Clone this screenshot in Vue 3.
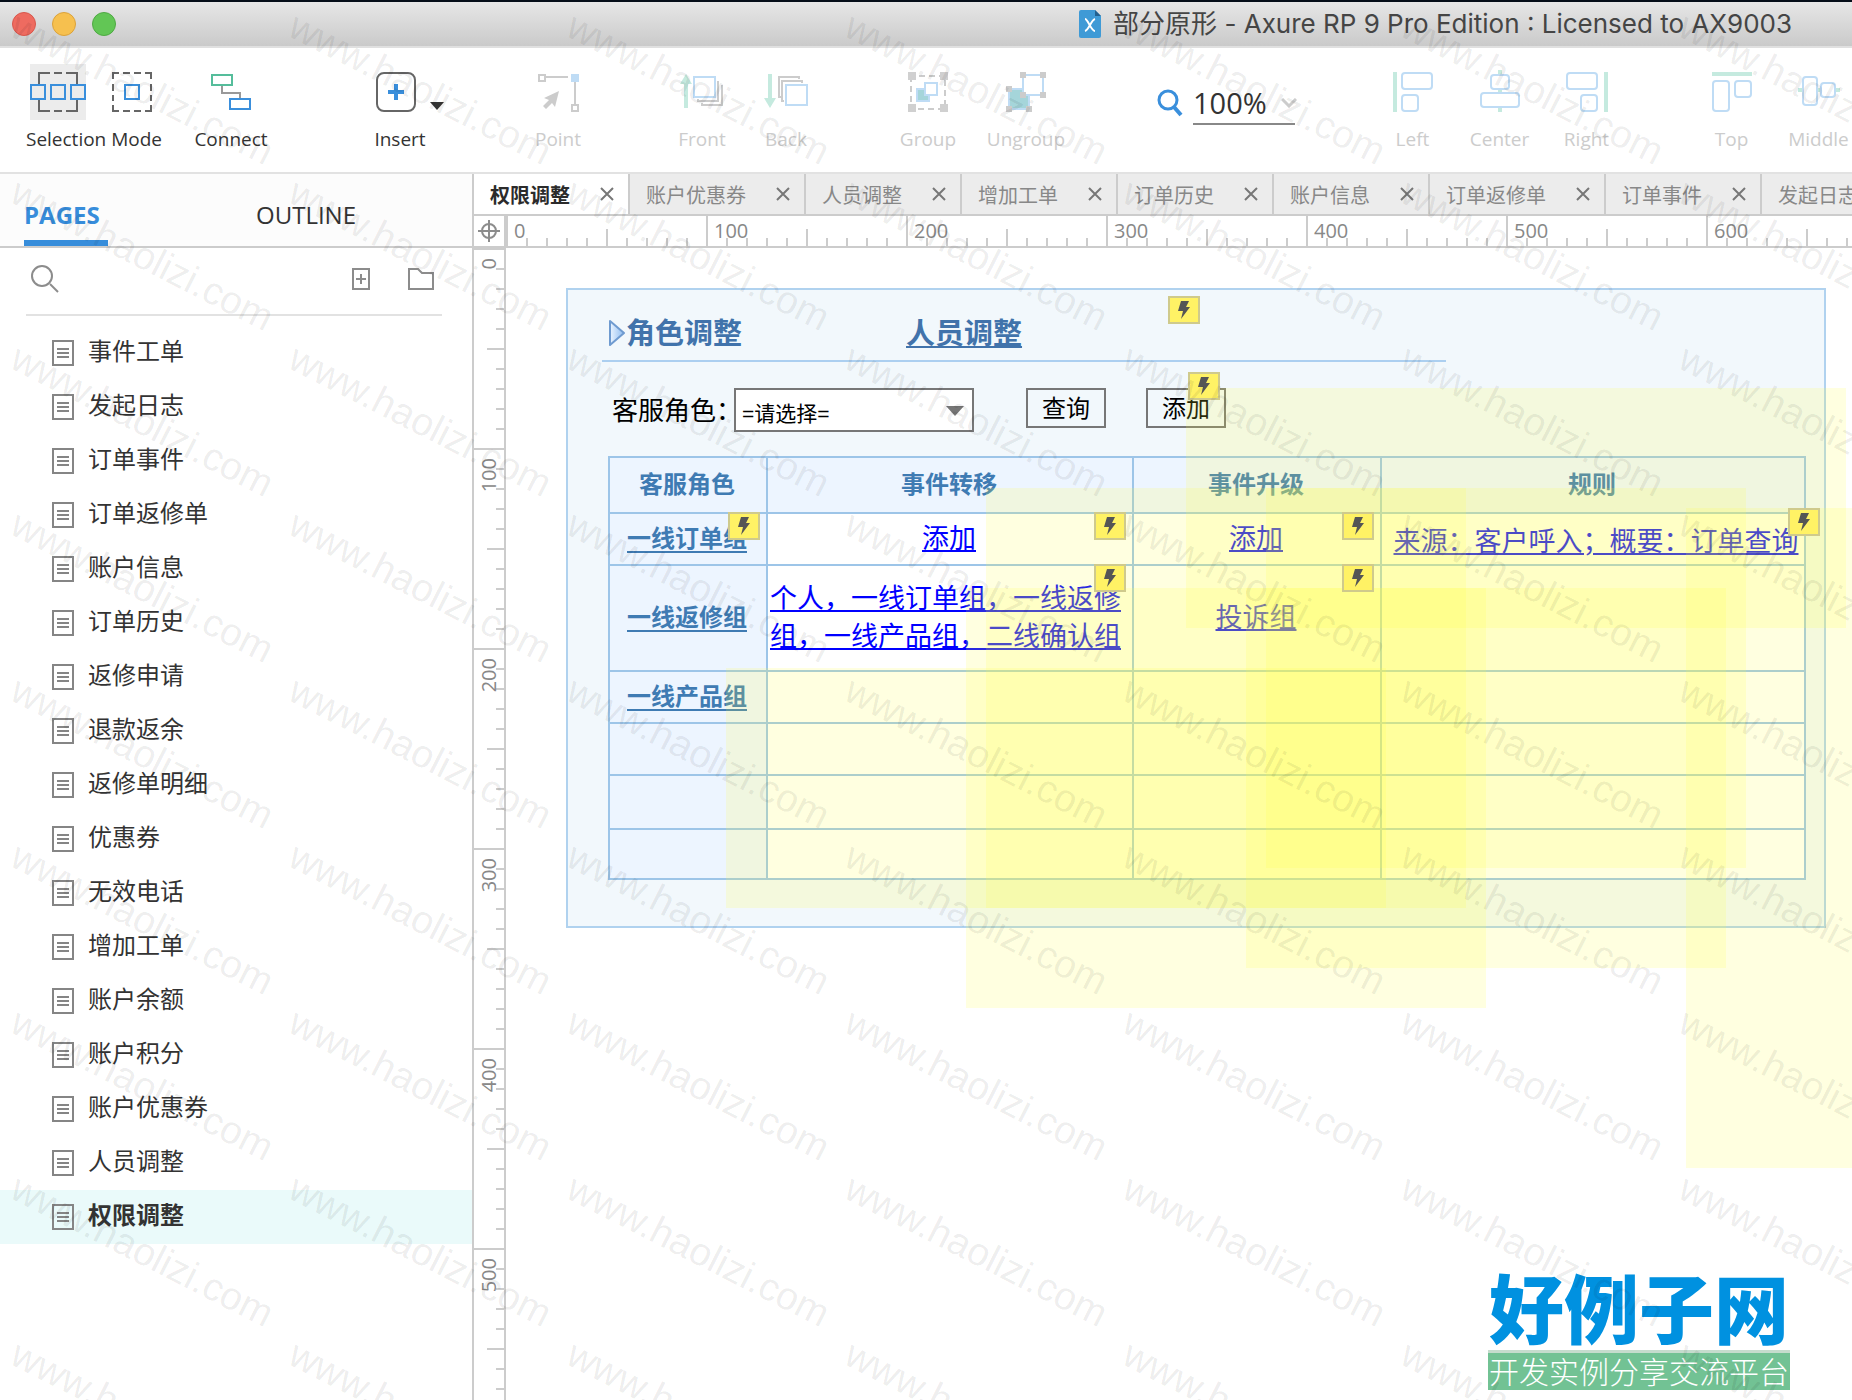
<script setup>
import { ref } from 'vue'

const pages = [
  '事件工单', '发起日志', '订单事件', '订单返修单', '账户信息', '订单历史', '返修申请', '退款返余', '返修单明细',
  '优惠券', '无效电话', '增加工单', '账户余额', '账户积分', '账户优惠券', '人员调整', '权限调整',
]
const tabs = ['权限调整', '账户优惠券', '人员调整', '增加工单', '订单历史', '账户信息', '订单返修单', '订单事件', '发起日志']
const current = ref('权限调整')
const zoom = ref('100%')

const marksX = [0, 100, 200, 300, 400, 500, 600]
const marksY = [0, 100, 200, 300, 400, 500]

// Canvas coordinates of the interaction notes and their markers
const notes = [
  { x: 680, y: 140, w: 660, h: 240 },
  { x: 480, y: 240, w: 480, h: 420 },
  { x: 760, y: 240, w: 480, h: 380 },
  { x: 1180, y: 260, w: 660, h: 660 },
  { x: 460, y: 340, w: 520, h: 420 },
  { x: 740, y: 340, w: 480, h: 380 },
  { x: 220, y: 420, w: 660, h: 240 },
]
const bolts = [
  { x: 662, y: 48 }, { x: 682, y: 124 }, { x: 222, y: 264 }, { x: 588, y: 264 },
  { x: 836, y: 264 }, { x: 1282, y: 260 }, { x: 588, y: 316 }, { x: 836, y: 316 },
]

const stamps = []
for (let r = 0; r < 9; r++) for (let c = 0; c < 7; c++) stamps.push({ x: 8 + c * 278, y: 35 + r * 166 })
</script>

<template>
  <div class="app">
    <header class="titlebar">
      <div class="lights"><i class="red"></i><i class="amber"></i><i class="green"></i></div>
      <div class="title">
        <svg width="22" height="28" viewBox="0 0 22 28">
          <path d="M2 0H16L22 6V26a2 2 0 0 1-2 2H2a2 2 0 0 1-2-2V2a2 2 0 0 1 2-2z" fill="#3f9ad6" />
          <path d="M16 0L22 6H16z" fill="#23608f" />
          <path d="M6 9C9 9 12 21 16 21M16 9C12 10 10 20 6 21" fill="none" stroke="#fff" stroke-width="2" />
        </svg>
        <h1>部分原形 - Axure RP 9 Pro Edition : Licensed to AX9003</h1>
      </div>
    </header>

    <nav class="toolbar">
      <div class="tool mode">
        <div class="pair">
          <button class="pick on" aria-label="Intersect">
            <svg width="56" height="56" viewBox="0 0 56 56" fill="none" stroke-width="2">
              <path d="M9 20V9H20M24 9H32M36 9H47V20M47 36V47H36M32 47H24M20 47H9V36" stroke="#666" />
              <path d="M1 21H15V35H1zM21 21H35V35H21zM41 21H55V35H41z" stroke="#3a8fdc" />
            </svg>
          </button>
          <button class="pick" aria-label="Contain">
            <svg width="40" height="56" viewBox="0 0 40 56" fill="none" stroke-width="2">
              <path d="M1 15V9H7M11 9H18M22 9H29M33 9H39V15M39 20V27M39 31V37M39 41V47H33M29 47H22M18 47H11M7 47H1V41M1 37V31M1 27V20" stroke="#666" />
              <path d="M13 21H27V35H13z" stroke="#3a8fdc" />
            </svg>
          </button>
        </div>
        <span>Selection Mode</span>
      </div>
      <button class="tool connect">
        <svg width="40" height="56" viewBox="0 0 40 56" fill="none" stroke-width="2">
          <path d="M11 22V29H29V34" stroke="#999" />
          <path d="M1 11H21V21H1z" stroke="#55bd9b" />
          <path d="M19 35H39V45H19z" stroke="#3a8fdc" />
        </svg>
        <span>Connect</span>
      </button>
      <button class="tool insert">
        <svg width="86" height="56" viewBox="0 0 86 56" fill="none">
          <rect x="20" y="9" width="38" height="38" rx="7" stroke="#666" stroke-width="2" />
          <path d="M31 28H47M39 20V36" stroke="#3a8fdc" stroke-width="4" />
          <path d="M73 38H87L80 46z" fill="#333" />
        </svg>
        <span>Insert</span>
      </button>
      <button class="tool point off" disabled>
        <svg width="40" height="56" viewBox="0 0 40 56" fill="none" stroke-width="2">
          <path d="M7 13H30M37 18V40" stroke="#ccc" />
          <path d="M1 11H7V17H1zM34 41H40V47H34z" stroke="#ccc" />
          <path d="M33 10H41V18H33z" fill="#bfdcf5" />
          <path d="M21 27L6 34L11 36L5 42L8 45L14 39L17 43z" fill="#ccc" />
        </svg>
        <span>Point</span>
      </button>
      <div class="group">
        <button class="tool off" disabled>
          <svg width="44" height="56" viewBox="0 0 44 56" fill="none" stroke-width="2">
            <path d="M6 44V18" stroke="#c5eadf" stroke-width="4" />
            <path d="M0 20L6 10L12 20z" fill="#c5eadf" />
            <path d="M18 35V37H38V17M22 39V41H42V21" stroke="#ccc" />
            <path d="M14 13H35V33H14z" stroke="#bfdcf5" />
          </svg>
          <span>Front</span>
        </button>
        <button class="tool off back" disabled>
          <svg width="44" height="56" viewBox="0 0 44 56" fill="none" stroke-width="2">
            <path d="M6 10V36" stroke="#c5eadf" stroke-width="4" />
            <path d="M0 34L6 44L12 34z" fill="#c5eadf" />
            <path d="M17 33H15V13H35V15M20 37H18V17H38V19" stroke="#ccc" />
            <path d="M22 21H43V41H22z" stroke="#bfdcf5" />
          </svg>
          <span>Back</span>
        </button>
      </div>
      <div class="group">
        <button class="tool off" disabled>
          <svg width="40" height="56" viewBox="0 0 40 56" fill="none" stroke-width="2">
            <path d="M3 12V45H37V12z" stroke="#ccc" stroke-dasharray="6 4" />
            <path d="M0 8H8V16H0zM32 8H40V16H32zM0 40H8V48H0zM32 40H40V48H32z" fill="#d0d0d0" />
            <path d="M9 25H21V37H9z" fill="#a5d5da" stroke="#bfdcf5" />
            <path d="M17 19H29V31H17z" fill="#fff" stroke="#bfdcf5" />
          </svg>
          <span>Group</span>
        </button>
        <button class="tool off ungroup" disabled>
          <svg width="40" height="56" viewBox="0 0 40 56" fill="none" stroke-width="2">
            <path d="M3 25H23V45H3z" fill="#a5d5da" stroke="#bfdcf5" />
            <path d="M17 11H37V31H17z" fill="#fff" stroke="#bfdcf5" />
            <path d="M14 8H20V14H14zM34 8H40V14H34zM14 28H20V34H14zM34 28H40V34H34zM0 22H6V28H0zM0 42H6V48H0zM20 42H26V48H20z" fill="#ccc" />
          </svg>
          <span>Ungroup</span>
        </button>
      </div>
      <label class="zoom">
        <svg width="26" height="28" viewBox="0 0 26 28" fill="none" stroke="#3a8fdc">
          <circle cx="11" cy="11" r="9" stroke-width="3" />
          <path d="M17 18L24 26" stroke-width="4" />
        </svg>
        <input v-model="zoom" aria-label="Zoom" />
        <svg class="chev" width="16" height="10" viewBox="0 0 16 10" fill="none" stroke="#ccc" stroke-width="3"><path d="M1 1L8 8L15 1" /></svg>
      </label>
      <div class="group align">
        <button class="tool off" disabled>
          <svg width="40" height="56" viewBox="0 0 40 56" fill="none" stroke="#bfdcf5" stroke-width="2">
            <path d="M2 8V48" stroke="#c5eadf" stroke-width="4" />
            <rect x="9" y="9" width="30" height="16" rx="3" /><rect x="9" y="31" width="16" height="16" rx="3" />
          </svg>
          <span>Left</span>
        </button>
        <button class="tool off" disabled>
          <svg width="40" height="56" viewBox="0 0 40 56" fill="none" stroke="#bfdcf5" stroke-width="2">
            <path d="M20 6V10M20 26V28M20 44V48" stroke="#c5eadf" stroke-width="4" />
            <rect x="11" y="11" width="18" height="14" rx="3" /><rect x="1" y="29" width="38" height="14" rx="3" />
          </svg>
          <span>Center</span>
        </button>
        <button class="tool off" disabled>
          <svg width="42" height="56" viewBox="0 0 42 56" fill="none" stroke="#bfdcf5" stroke-width="2">
            <path d="M40 8V48" stroke="#c5eadf" stroke-width="4" />
            <rect x="1" y="9" width="30" height="16" rx="3" /><rect x="15" y="31" width="16" height="16" rx="3" />
          </svg>
          <span>Right</span>
        </button>
      </div>
      <div class="group align">
        <button class="tool off" disabled>
          <svg width="40" height="56" viewBox="0 0 40 56" fill="none" stroke="#bfdcf5" stroke-width="2">
            <path d="M0 10H40" stroke="#c5eadf" stroke-width="4" />
            <rect x="1" y="17" width="16" height="30" rx="3" /><rect x="23" y="17" width="16" height="16" rx="3" />
          </svg>
          <span>Top</span>
        </button>
        <button class="tool off" disabled>
          <svg width="42" height="56" viewBox="0 0 42 56" fill="none" stroke="#bfdcf5" stroke-width="2">
            <path d="M0 26H4M20 26H22M38 26H42" stroke="#c5eadf" stroke-width="4" />
            <rect x="5" y="13" width="14" height="28" rx="3" /><rect x="23" y="19" width="14" height="14" rx="3" />
          </svg>
          <span>Middle</span>
        </button>
      </div>
    </nav>

    <div class="body">
      <aside class="side">
        <div class="sidetabs">
          <button class="sel">PAGES</button>
          <button>OUTLINE</button>
        </div>
        <div class="find">
          <svg width="28" height="28" viewBox="0 0 28 28" fill="none" stroke="#8c8c8c" stroke-width="2">
            <circle cx="11" cy="11" r="10" /><path d="M19 19L27 27" />
          </svg>
          <button aria-label="Add page">
            <svg width="18" height="22" viewBox="0 0 18 22" fill="none" stroke="#8c8c8c" stroke-width="2"><path d="M1 1H17V21H1zM4 11H14M9 6V16" /></svg>
          </button>
          <button aria-label="Add folder">
            <svg width="26" height="22" viewBox="0 0 26 22" fill="none" stroke="#8c8c8c" stroke-width="2"><path d="M1 1H10L14 5H25V21H1z" /></svg>
          </button>
        </div>
        <ul class="tree">
          <li v-for="p in pages" :key="p" :class="{ current: p === current }">
            <a href="#" @click.prevent="current = p">
              <svg width="22" height="26" viewBox="0 0 22 26" fill="none" stroke="#858585" stroke-width="2"><path d="M1 1H21V25H1zM5 9H17M5 13H17M5 17H17" /></svg>
              <span>{{ p }}</span>
            </a>
          </li>
        </ul>
      </aside>

      <main class="work">
        <div class="tabs">
          <div v-for="t in tabs" :key="t" class="tab" :class="{ active: t === '权限调整' }">
            <button class="name">{{ t }}</button>
            <button class="close" :aria-label="'Close ' + t">
              <svg width="14" height="14" viewBox="0 0 14 14" fill="none" stroke="#777" stroke-width="2"><path d="M1 1L13 13M13 1L1 13" /></svg>
            </button>
          </div>
        </div>
        <div class="hrule">
          <div class="corner">
            <svg width="22" height="22" viewBox="0 0 22 22" fill="none" stroke="#8c8c8c" stroke-width="2"><circle cx="11" cy="11" r="7" /><path d="M0 11H22M11 0V22" /></svg>
          </div>
          <div v-for="m in marksX" :key="m" class="hseg">{{ m }}</div>
        </div>
        <div class="stage">
          <div class="vrule">
            <div v-for="m in marksY" :key="m" class="vseg"><span>{{ m }}</span></div>
          </div>
          <div class="canvas">
            <section class="panel">
              <div class="heads">
                <svg width="16" height="26" viewBox="0 0 16 26">
                  <defs><linearGradient id="tri"><stop offset="0" stop-color="#eaf4ff" /><stop offset="1" stop-color="#8fbcf0" /></linearGradient></defs>
                  <path d="M1 1L15 13L1 25z" fill="url(#tri)" stroke="#6f9bd0" stroke-width="2" stroke-linejoin="round" />
                </svg>
                <h2>角色调整</h2>
                <a href="#">人员调整</a>
              </div>
              <form class="filter" @submit.prevent>
                <label for="role">客服角色：</label>
                <div class="drop">
                  <select id="role"><option>=请选择=</option></select>
                  <svg width="18" height="10" viewBox="0 0 18 10"><path d="M0 0H18L9 10z" fill="#767676" /></svg>
                </div>
                <button class="query">查询</button>
                <button type="button">添加</button>
              </form>
              <table>
                <colgroup><col class="c1" /><col class="c2" /><col class="c3" /><col class="c4" /></colgroup>
                <thead>
                  <tr class="r56"><th>客服角色</th><th>事件转移</th><th>事件升级</th><th>规则</th></tr>
                </thead>
                <tbody>
                  <tr class="r52">
                    <th><a href="#">一线订单组</a></th><td><a href="#">添加</a></td><td><a href="#">添加</a></td>
                    <td class="rule"><a href="#">来源：客户呼入；概要：订单查询</a></td>
                  </tr>
                  <tr class="r106">
                    <th><a href="#">一线返修组</a></th>
                    <td class="long"><a href="#">个人，一线订单组，一线返修组，一线产品组，二线确认组</a></td>
                    <td><a href="#">投诉组</a></td><td></td>
                  </tr>
                  <tr class="r52"><th><a href="#">一线产品组</a></th><td></td><td></td><td></td></tr>
                  <tr class="r52"><th></th><td></td><td></td><td></td></tr>
                  <tr class="r54"><th></th><td></td><td></td><td></td></tr>
                  <tr class="r50"><th></th><td></td><td></td><td></td></tr>
                </tbody>
              </table>
            </section>
            <div v-for="(n, i) in notes" :key="'n' + i" class="note" :style="{ left: n.x + 'px', top: n.y + 'px', width: n.w + 'px', height: n.h + 'px' }"></div>
            <div v-for="(b, i) in bolts" :key="'b' + i" class="bolt" :style="{ left: b.x + 'px', top: b.y + 'px' }">
              <svg width="14" height="18" viewBox="0 0 14 18"><path d="M4 0H12L9 6H13L4 18L6 10H1z" fill="#555" /></svg>
            </div>
          </div>
        </div>
      </main>
    </div>

    <div class="brand">
      <strong>好例子网</strong>
      <span>开发实例分享交流平台</span>
    </div>
    <svg class="stamps" aria-hidden="true">
      <text v-for="(s, i) in stamps" :key="i" :transform="`translate(${s.x} ${s.y}) rotate(27)`">www.haolizi.com</text>
    </svg>
  </div>
</template>

<style>
body { margin: 0; }
</style>

<style scoped>
* { box-sizing: border-box; }
.app {
  position: relative; display: flex; flex-direction: column; height: 100vh; overflow: hidden;
  background: #fff; color: #333; font-family: "Open Sans", "Noto Sans CJK SC", sans-serif;
}
button { margin: 0; padding: 0; border: 0; background: none; font: inherit; color: inherit; }
svg { display: block; flex: none; }

.titlebar {
  flex: none; display: flex; align-items: center; height: 48px; padding: 0 60px 0 12px;
  border-top: 2px solid #050d18; border-bottom: 2px solid #e0e0e0;
  background: linear-gradient(#e6e6e6, #cacaca);
}
.lights { display: flex; gap: 16px; }
.lights i { width: 24px; height: 24px; border-radius: 50%; border: 1px solid #d8574c; background: #ee6b60; }
.lights .amber { background: #f6c04f; border-color: #dba23b; }
.lights .green { background: #62c655; border-color: #4fa943; }
.title { display: flex; align-items: center; gap: 12px; margin-left: auto; }
h1 { margin: 0; font: 400 26px/42px Inter, "Noto Sans CJK SC", sans-serif; color: #454545; white-space: nowrap; }

.toolbar {
  flex: none; display: flex; height: 126px; padding: 16px 0 0 26px; overflow: hidden;
  border-bottom: 2px solid #e2e2e2; font-size: 19px; line-height: 24px; white-space: nowrap;
}
.tool { flex: none; display: flex; flex-direction: column; align-items: center; justify-content: flex-start; gap: 7px; width: 86px; height: 96px; }
.tool.off { color: #ccc; }
.mode { width: 136px; }
.pair { display: flex; gap: 26px; align-self: flex-start; margin-left: 4px; }
.pick.on { background: #ececec; }
.connect { margin-left: 26px; }
.insert { margin-left: 83px; }
.insert svg { overflow: visible; }
.point { margin-left: 72px; }
.point svg { overflow: visible; }
.group { flex: none; display: flex; margin-left: 58px; }
.tool.back { width: 82px; }
.align .tool { width: 87px; }
.tool.ungroup { width: 110px; }
.zoom { flex: none; display: flex; align-items: center; width: 138px; height: 46px; margin: 16px 16px 0 76px; }
.zoom input {
  width: 102px; height: 44px; margin-left: 10px; padding: 0; border: 0; border-bottom: 2px solid #888;
  background: none; font: 29px/40px "Open Sans", sans-serif; color: #333; outline: 0;
}
.zoom .chev { margin-left: -14px; }

.body { flex: 1; display: flex; min-height: 0; }
.side { flex: none; width: 474px; border-right: 2px solid #ccc; }
.sidetabs { display: flex; height: 74px; padding-left: 24px; background: #fcfcfc; border-bottom: 2px solid #ccc; font-size: 24px; }
.sidetabs button { height: 72px; width: 84px; padding-top: 14px; text-align: left; border-bottom: 6px solid transparent; }
.sidetabs .sel { font-weight: 700; color: #378ddb; border-color: #378ddb; margin-right: 148px; }
.find { display: flex; align-items: center; height: 68px; margin: 0 30px 10px 26px; padding: 0 8px 4px 5px; border-bottom: 2px solid #e2e2e2; }
.find svg:first-child + button { margin-left: auto; margin-right: 38px; }
.tree { list-style: none; margin: 0; padding: 0; }
.tree a { display: flex; align-items: center; gap: 14px; height: 54px; padding-left: 52px; font-size: 24px; line-height: 36px; color: #333; text-decoration: none; }
.tree span { padding-bottom: 4px; }
.tree .current { background: #eafafa; font-weight: 700; }

.work { flex: 1; min-width: 0; display: flex; flex-direction: column; }
.tabs { flex: none; display: flex; height: 42px; overflow: hidden; background: #ececec; border-bottom: 2px solid #ccc; font-size: 20px; color: #888; }
.tab { flex: none; display: flex; align-items: center; padding: 0 14px 0 16px; border-right: 2px solid #ccc; }
.tab .name { margin-right: 30px; padding-top: 4px; line-height: 36px; white-space: nowrap; }
.tab.active { background: #fff; color: #2b2b2b; font-weight: 700; }

.hrule { flex: none; display: flex; height: 32px; overflow: hidden; border-bottom: 2px solid #ccc; }
.corner { flex: none; display: flex; align-items: center; justify-content: center; width: 32px; border-right: 2px solid #ccc; }
.hseg {
  flex: none; width: 200px; padding-left: 8px; font-size: 20px; line-height: 30px; color: #888;
  background:
    linear-gradient(#ccc, #ccc) 0 0 / 2px 100% no-repeat,
    linear-gradient(#ccc, #ccc) 100px 100% / 2px 17px no-repeat,
    linear-gradient(90deg, #ccc 2px, transparent 2px) 0 100% / 20px 8px repeat-x;
}
.stage { flex: 1; display: flex; min-height: 0; overflow: hidden; }
.vrule { flex: none; width: 32px; border-right: 2px solid #ccc; }
.vseg {
  height: 200px; padding-top: 10px; font-size: 20px; line-height: 30px; color: #888;
  background:
    linear-gradient(#ccc, #ccc) 0 0 / 100% 2px no-repeat,
    linear-gradient(#ccc, #ccc) 100% 100px / 17px 2px no-repeat,
    linear-gradient(#ccc 2px, transparent 2px) 100% 0 / 8px 20px repeat-y;
}
.vseg span { display: block; width: 30px; writing-mode: vertical-rl; transform: rotate(180deg); }

.canvas { flex: 1; position: relative; overflow: hidden; }
.panel { position: absolute; left: 60px; top: 40px; width: 1260px; height: 640px; border: 2px solid #b0d2ef; background: #f2f8fc; }
.heads {
  display: flex; align-items: center; width: 844px; height: 72px; margin-left: 34px; padding: 16px 0 0 7px;
  border-bottom: 2px solid #accff0; font-size: 29px; line-height: 40px;
}
.heads h2 { margin: 0 164px 0 1px; font-size: 29px; font-weight: 700; color: #4173ab; }
.heads a { font-weight: 700; color: #4173ab; }
.filter { display: flex; align-items: flex-start; height: 44px; margin: 26px 0 24px 44px; font-size: 26px; color: #000; }
.filter label { width: 122px; line-height: 44px; white-space: nowrap; }
.drop { position: relative; width: 240px; margin-right: 52px; }
.drop select {
  appearance: none; width: 240px; height: 44px; padding: 6px 6px 0; border: 2px solid #777; border-radius: 0;
  background: #fff; font: 21px "Liberation Sans", "Noto Sans CJK SC", sans-serif; color: #000;
}
.drop svg { position: absolute; right: 10px; top: 18px; }
.filter button { width: 80px; height: 40px; border: 2px solid #777; font-size: 24px; line-height: 36px; }
.filter .query { margin-right: 40px; }

table { width: 1198px; margin-left: 40px; border-collapse: collapse; table-layout: fixed; }
.c1 { width: 158px; } .c2 { width: 366px; } .c3 { width: 248px; } .c4 { width: 424px; }
.r56 { height: 56px; } .r52 { height: 52px; } .r106 { height: 106px; } .r54 { height: 54px; } .r50 { height: 50px; }
th, td { padding: 0 2px 2px 0; border: 2px solid #9dc5e8; text-align: center; vertical-align: middle; line-height: 38px; }
th { background: #edf5ff; font-size: 24px; font-weight: 700; color: #3f7bb3; }
td { background: #fff; font-size: 27px; }
th a { color: #3f7bb3; text-underline-offset: 4px; }
td a { color: #0000ff; }
td.long { padding: 0 2px 2px; text-align: left; }
td.rule { padding: 4px 0 0 6px; }

.note { position: absolute; background: rgba(255, 255, 60, .16); }
.bolt { position: absolute; display: flex; align-items: center; justify-content: center; width: 32px; height: 28px; border: 2px solid #cfca8c; background: #fff265; }

.brand { position: absolute; right: 62px; bottom: 10px; width: 302px; text-align: center; white-space: nowrap; }
.brand strong { display: block; height: 82px; font: 900 75px/76px "Noto Sans CJK SC", sans-serif; color: #0091e0; }
.brand span { display: block; height: 40px; border-top: 3px solid #c5dccd; background: #72c294; font: 300 30px/34px "Noto Sans CJK SC", sans-serif; color: #fff; }

.stamps { position: absolute; left: 0; top: 0; width: 100%; height: 100%; pointer-events: none; }
.stamps text { font: 39px "Liberation Sans", sans-serif; fill: #000; fill-opacity: .08; }
</style>
